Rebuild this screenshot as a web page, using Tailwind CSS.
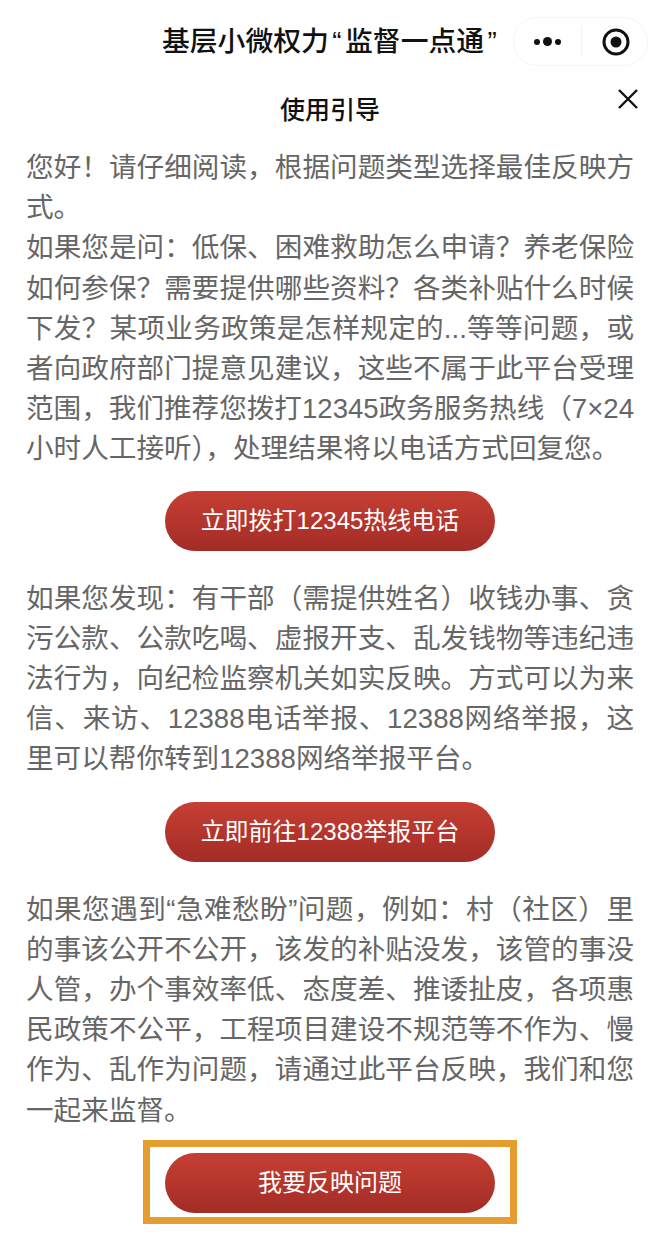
<!DOCTYPE html>
<html lang="zh-CN">
  <head>
    <meta charset="UTF-8" />
    <title>使用引导</title>
    <script src="https://cdn.jsdelivr.net/npm/@tailwindcss/browser@4"></script>
  </head>
  <body class="bg-white font-['Liberation_Sans','Noto_Sans_CJK_SC',sans-serif]">
    <div class="w-[660px] h-[1247px] overflow-hidden flex flex-col">
      <!-- mini program nav bar -->
      <div class="h-[82px] flex items-center pl-[162px] pt-[1px]">
        <div class="w-[351px] text-[27.8px] font-medium text-[#111] leading-none whitespace-nowrap">基层小微权力<span class="px-[3.5px]">“</span>监督一点通<span class="px-[3.5px]">”</span></div>
        <div class="w-[135px] h-[49px] shrink-0 rounded-full border border-[#f5f5f5] flex items-center">
          <div class="w-[68px] h-[31px] border-r border-[#f2f2f2] flex items-center justify-center gap-[3px]">
            <span class="w-[6px] h-[6px] rounded-full bg-[#111]"></span>
            <span class="w-[9px] h-[9px] rounded-full bg-[#111]"></span>
            <span class="w-[6px] h-[6px] rounded-full bg-[#111]"></span>
          </div>
          <div class="flex-1 flex items-center justify-center pl-[2px]">
            <svg class="w-[28px] h-[28px]" viewBox="0 0 28 28"><circle cx="14" cy="14" r="12" fill="none" stroke="#111" stroke-width="3"/><circle cx="14" cy="14" r="5.5" fill="#111"/></svg>
          </div>
        </div>
      </div>

      <!-- dialog heading -->
      <div class="relative h-[54px] pt-[3px] flex items-center justify-center text-[25px] font-medium text-[#111] leading-none">
        使用引导
        <svg class="absolute left-[617px] top-[6px] w-[22px] h-[22px]" viewBox="0 0 22 22"><path d="M2 2 L20 20 M20 2 L2 20" stroke="#111" stroke-width="2.4" fill="none"/></svg>
      </div>

      <div class="px-[26px] pt-[12px] text-[27.6px] leading-[40.2px] text-[#666] text-justify">
        <p>您好&#xFF01;请仔细阅读&#xFF0C;根据问题类型选择最佳反映方式。</p>
        <p>如果您是问&#xFF1A;低保、困难救助怎么申请&#xFF1F;养老保险如何参保&#xFF1F;需要提供哪些资料&#xFF1F;各类补贴什么时候下发&#xFF1F;某项业务政策是怎样规定的...等等问题&#xFF0C;或者向政府部门提意见建议&#xFF0C;这些不属于此平台受理范围&#xFF0C;我们推荐您拨打12345政务服务热线&#xFF08;7×24小时人工接听&#xFF09;&#xFF0C;处理结果将以电话方式回复您。</p>

        <div class="mt-[21px] mb-[28px] flex justify-center">
          <button class="w-[330px] h-[60px] rounded-full bg-gradient-to-b from-[#c63f33] to-[#a32c27] text-white text-[24px] font-normal">立即拨打12345热线电话</button>
        </div>

        <p>如果您发现&#xFF1A;有干部&#xFF08;需提供姓名&#xFF09;收钱办事、贪污公款、公款吃喝、虚报开支、乱发钱物等违纪违法行为&#xFF0C;向纪检监察机关如实反映。方式可以为来信、来访、12388电话举报、12388网络举报&#xFF0C;这里可以帮你转到12388网络举报平台。</p>

        <div class="mt-[22px] mb-[28px] flex justify-center">
          <button class="w-[330px] h-[60px] rounded-full bg-gradient-to-b from-[#c63f33] to-[#a32c27] text-white text-[24px] font-normal">立即前往12388举报平台</button>
        </div>

        <p>如果您遇到“急难愁盼”问题&#xFF0C;例如&#xFF1A;村&#xFF08;社区&#xFF09;里的事该公开不公开&#xFF0C;该发的补贴没发&#xFF0C;该管的事没人管&#xFF0C;办个事效率低、态度差、推诿扯皮&#xFF0C;各项惠民政策不公平&#xFF0C;工程项目建设不规范等不作为、慢作为、乱作为问题&#xFF0C;请通过此平台反映&#xFF0C;我们和您一起来监督。</p>

        <div class="mt-[9px] -mx-[1px] flex justify-center">
          <div class="w-[374px] h-[84px] pt-[2px] border-[7px] border-[#e59d2f] flex items-center justify-center">
            <button class="w-[330px] h-[60px] rounded-full bg-gradient-to-b from-[#c63f33] to-[#a32c27] text-white text-[24px] font-normal">我要反映问题</button>
          </div>
        </div>
      </div>
    </div>
  </body>
</html>
